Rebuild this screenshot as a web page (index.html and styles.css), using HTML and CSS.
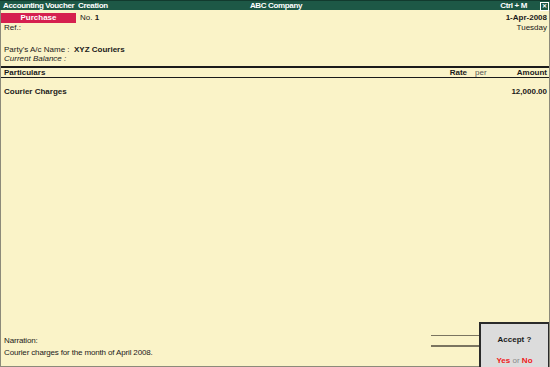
FILE: index.html
```
<!DOCTYPE html>
<html lang="en">
<head>
    <meta charset="UTF-8">
    <title>Accounting Voucher Creation</title>
    <link rel="stylesheet" href="styles.css">
</head>
<body>
<div class="titlebar">
    <span class="title-left">Accounting Voucher &nbsp;Creation</span>
    <span class="title-center">ABC Company</span>
    <span class="title-right">Ctrl + M <span class="close-box">&#x2715;</span></span>
</div>

<div class="voucher">
    <div class="line head">
        <div class="left">
            <span class="vtype">Purchase</span>
            <span>No. <b>1</b></span>
        </div>
        <b>1-Apr-2008</b>
    </div>
    <div class="line">
        <span>Ref.:</span>
        <span>Tuesday</span>
    </div>

    <div class="party">
        <div class="line">
            <span>Party's A/c Name : &nbsp;<b>XYZ Couriers</b></span>
        </div>
        <div class="line"><i>Current Balance :</i></div>
    </div>

    <div class="cols">
        <span class="c-part">Particulars</span>
        <span class="c-rate">Rate</span>
        <span class="c-per">per</span>
        <span class="c-amt">Amount</span>
    </div>

    <div class="entry">
        <b>Courier Charges</b>
        <b>12,000.00</b>
    </div>

    <div class="narration">
        <div>Narration:</div>
        <div>Courier charges for the month of April 2008.</div>
    </div>
</div>

<div class="rule rule-thin"></div>
<div class="rule rule-thick"></div>
<div class="accept">
    <b>Accept ?</b>
    <div class="choice"><span class="yn">Yes</span> <span class="or">or</span> <span class="yn">No</span></div>
</div>
</body>
</html>
```

FILE: styles.css
```
html, body {
    margin: 0;
    height: 367px;
    overflow: hidden;
}
body {
    font-family: "Liberation Sans", Arial, sans-serif;
    font-size: 8px;
    color: #1a1a1a;
    background-color: #faf3c8;
    display: flex;
    flex-direction: column;
    position: relative;
}
b {
    font-weight: bold;
}
.titlebar {
    height: 9px;
    line-height: 9px;
    background-color: #1d5846;
    color: #fff;
    font-weight: bold;
    letter-spacing: -0.35px;
    display: flex;
    justify-content: space-between;
    padding: 0 1px 0 3px;
    border-top: 1px solid #123a2e;
}
.title-left, .title-right {
    width: 180px;
}
.title-right {
    text-align: right;
}
.close-box {
    display: inline-block;
    width: 7px;
    height: 7px;
    line-height: 7px;
    font-size: 6px;
    letter-spacing: 0;
    text-align: center;
    border: 1px solid #fff;
    margin-left: 11px;
    vertical-align: 0;
}
.voucher {
    flex: 1;
    display: flex;
    flex-direction: column;
    border-left: 1px solid #8c8a7a;
    border-right: 1px solid #8c8a7a;
    border-bottom: 1px solid #8c8a7a;
}
.line {
    display: flex;
    justify-content: space-between;
    padding: 0 2px 0 3px;
    height: 9px;
    line-height: 9px;
}
.head {
    margin-top: 3px;
    height: 10px;
    line-height: 10px;
    padding-left: 0;
}
.left {
    display: flex;
    gap: 4px;
}
.vtype {
    width: 75px;
    background-color: #d5204f;
    color: #fff;
    font-weight: bold;
    text-align: center;
}
.party {
    margin-top: 13px;
}
.cols {
    margin-top: 3px;
    border-top: 2px solid #1a1a1a;
    border-bottom: 1px solid #1a1a1a;
    display: flex;
    height: 9px;
    line-height: 9px;
    padding: 0 2px 0 3px;
    font-weight: bold;
}
.c-part {
    flex: 1;
}
.c-per {
    font-weight: normal;
    color: #555;
    margin-left: 8px;
    width: 34px;
}
.c-amt {
    width: 38px;
    text-align: right;
}
.entry {
    display: flex;
    justify-content: space-between;
    padding: 0 2px 0 3px;
    margin-top: 9px;
    line-height: 9px;
}
.narration {
    margin-top: auto;
    padding: 0 0 7px 3px;
    line-height: 12px;
    letter-spacing: -0.15px;
}
.rule {
    position: absolute;
    left: 431px;
    width: 48px;
    background-color: #7a7460;
}
.rule-thin {
    top: 335px;
    height: 1px;
}
.rule-thick {
    top: 345px;
    height: 2px;
}
.accept {
    position: absolute;
    left: 479px;
    top: 322px;
    width: 70px;
    height: 45px;
    box-sizing: border-box;
    background-color: #dcdcdc;
    border-left: 2px solid #2a2a2a;
    border-top: 2px solid #2a2a2a;
    border-right: 1px solid #2a2a2a;
    text-align: center;
    display: flex;
    flex-direction: column;
    justify-content: space-between;
    padding: 11px 0 2px;
}
.choice {
    line-height: 9px;
}
.yn {
    color: #f01818;
    font-weight: bold;
}
.or {
    color: #888;
}
```
